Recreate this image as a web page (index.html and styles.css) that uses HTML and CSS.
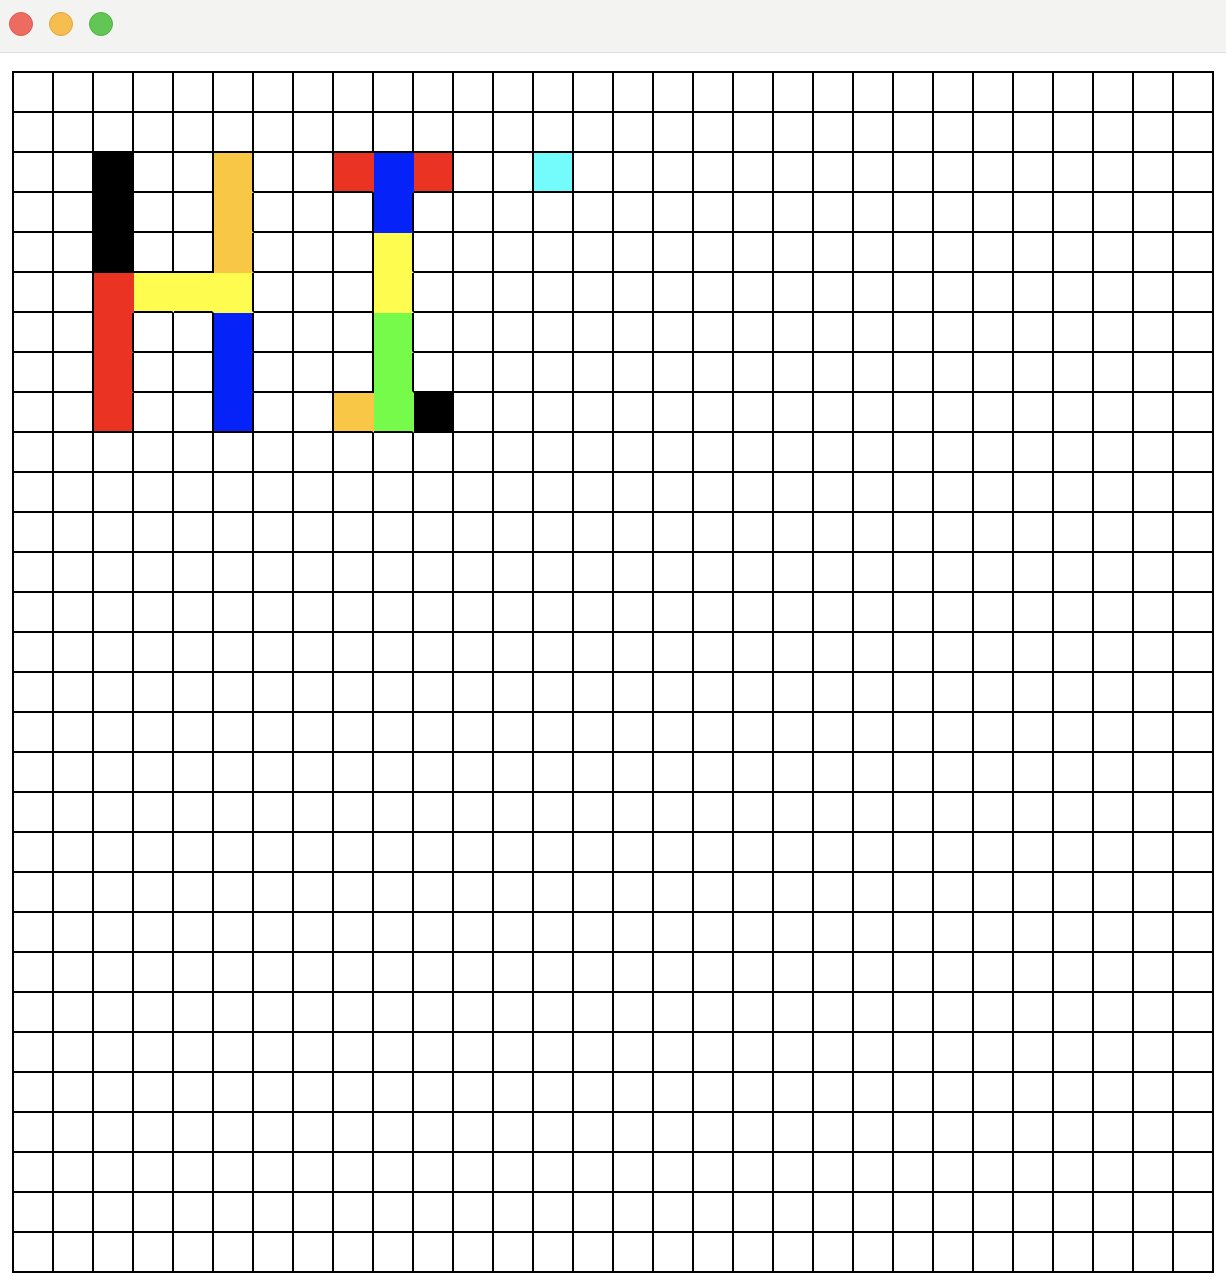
FILE: index.html
```html
<!DOCTYPE html>
<html lang="en">
<head>
<meta charset="utf-8">
<title>Grid</title>
<link rel="stylesheet" href="styles.css">
</head>
<body>
<div class="titlebar">
  <span class="light close"></span>
  <span class="light minimize"></span>
  <span class="light zoom"></span>
</div>
<div class="board">
  <div class="cell black c2 r2 jb"></div>
  <div class="cell black c2 r3 jb"></div>
  <div class="cell black c2 r4 jb"></div>
  <div class="cell orange c5 r2 jb"></div>
  <div class="cell orange c5 r3 jb"></div>
  <div class="cell orange c5 r4 jb"></div>
  <div class="cell red c2 r5 jr jb"></div>
  <div class="cell red c2 r6 jb"></div>
  <div class="cell red c2 r7 jb"></div>
  <div class="cell red c2 r8"></div>
  <div class="cell yellow c3 r5 jr"></div>
  <div class="cell yellow c4 r5 jr"></div>
  <div class="cell yellow c5 r5 jb"></div>
  <div class="cell blue c5 r6 jb"></div>
  <div class="cell blue c5 r7 jb"></div>
  <div class="cell blue c5 r8"></div>

  <div class="cell red c8 r2 jr"></div>
  <div class="cell blue c9 r2 jr jb"></div>
  <div class="cell blue c9 r3 jb"></div>
  <div class="cell red c10 r2"></div>
  <div class="cell yellow c9 r4 jb"></div>
  <div class="cell yellow c9 r5 jb"></div>
  <div class="cell green c9 r6 jb"></div>
  <div class="cell green c9 r7 jb"></div>
  <div class="cell green c9 r8 jr"></div>
  <div class="cell orange c8 r8 jr"></div>
  <div class="cell black c10 r8"></div>

  <div class="cell cyan c13 r2"></div>
</div>
</body>
</html>
```
FILE: styles.css
```css
html, body {
  margin: 0;
  padding: 0;
  background: #ffffff;
  font-family: "Liberation Sans", Arial, sans-serif;
}

.titlebar {
  height: 52px;
  background: #f3f3f2;
  border-bottom: 1px solid #dcdcdc;
  display: flex;
  align-items: center;
  gap: 16px;
  padding-left: 9px;
  box-sizing: content-box;
}

.light {
  width: 24px;
  height: 24px;
  border-radius: 50%;
  box-sizing: border-box;
  margin-top: -4px;
}

.close { background: #ee6b60; border: 1px solid #dc5a50; }
.minimize { background: #f6be4f; border: 1px solid #dea53f; }
.zoom { background: #62c655; border: 1px solid #52ad45; }

.board {
  margin: 18px 0 0 12px;
  width: 1200px;
  height: 1200px;
  padding: 2px 0 0 2px;
  display: grid;
  grid-template-columns: repeat(30, 40px);
  grid-template-rows: repeat(30, 40px);
  background-color: #ffffff;
  background-image:
    linear-gradient(to right, #000 2px, transparent 2px),
    linear-gradient(to bottom, #000 2px, transparent 2px);
  background-size: 40px 40px;
}

.cell {
  box-sizing: border-box;
  background: currentColor;
  border-right: 2px solid #000;
  border-bottom: 2px solid #000;
}

.jr { border-right-color: currentColor; }
.jb { border-bottom-color: currentColor; }

.black { color: #000000; }
.red { color: #eb3324; }
.blue { color: #0523f8; }
.yellow { color: #fffc50; }
.orange { color: #f7c745; }
.green { color: #76fb4b; }
.cyan { color: #74fcfd; }

.c2 { grid-column: 3; }
.c3 { grid-column: 4; }
.c4 { grid-column: 5; }
.c5 { grid-column: 6; }
.c8 { grid-column: 9; }
.c9 { grid-column: 10; }
.c10 { grid-column: 11; }
.c13 { grid-column: 14; }

.r2 { grid-row: 3; }
.r3 { grid-row: 4; }
.r4 { grid-row: 5; }
.r5 { grid-row: 6; }
.r6 { grid-row: 7; }
.r7 { grid-row: 8; }
.r8 { grid-row: 9; }
```
